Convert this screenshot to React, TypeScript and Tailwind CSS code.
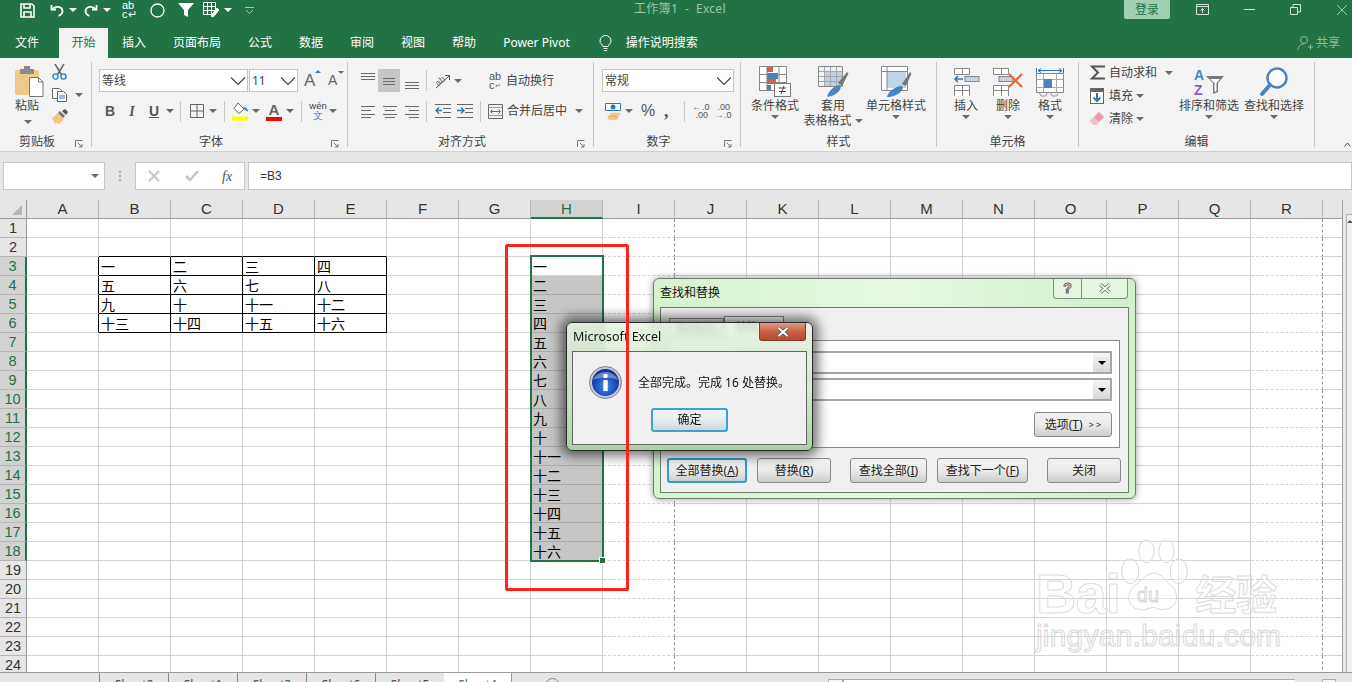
import React from 'react';

const COLS = ['A','B','C','D','E','F','G','H','I','J','K','L','M','N','O','P','Q','R'];
const TABLE: Record<string,string> = {
  B3:'一',C3:'二',D3:'三',E3:'四',
  B4:'五',C4:'六',D4:'七',E4:'八',
  B5:'九',C5:'十',D5:'十一',E5:'十二',
  B6:'十三',C6:'十四',D6:'十五',E6:'十六',
};
const HTEXT = ['一','二','三','四','五','六','七','八','九','十','十一','十二','十三','十四','十五','十六'];

const Caret = ({ c = 'border-t-[#6a6a6a]' }: { c?: string }) => (
  <span className={`inline-block w-0 h-0 border-l-[4px] border-r-[4px] border-t-[4px] border-l-transparent border-r-transparent ${c}`} />
);
const Chevron = () => (
  <svg width="16" height="10" viewBox="0 0 16 10" fill="none" stroke="#444" strokeWidth="1.2"><path d="M1 1.5 8 8.5 15 1.5" /></svg>
);
const Sep = () => <div className="w-px h-[21px] bg-[#c6c6c6]" />;
const Launcher = () => (
  <div className="w-[17px] flex justify-start pl-[1px] pt-[7px]">
    <svg width="8" height="8" viewBox="0 0 8 8" fill="none" stroke="#777"><path d="M.5 7V.5H7.5" /><path d="M2.5 2.5 7 7M7 4v3H4" /></svg>
  </div>
);

const Group = ({ w, label, launcher, children }: { w: string; label: string; launcher?: boolean; children: React.ReactNode }) => (
  <div className={`${w} h-[85px] shrink-0 flex flex-col border-r border-[#c4c4c4]`}>
    <div className="h-[71px] shrink-0">{children}</div>
    <div className="flex h-[14px] leading-[18px] text-[12px] text-[#444]">
      <div className="flex-1 text-center">{label}</div>
      {launcher && <Launcher />}
    </div>
  </div>
);

const Big = ({ w, icon, lines, caretInline }: { w: string; icon: React.ReactNode; lines: string[]; caretInline?: boolean }) => (
  <div className={`${w} shrink-0 flex flex-col items-center text-[12px] leading-[15px] text-[#444]`}>
    <div className="h-[33px] mt-[3px] flex items-center justify-center">{icon}</div>
    {lines.map((l, i) => (
      <div key={l} className="whitespace-nowrap flex items-center gap-[3px]">
        {l}{caretInline && i === lines.length - 1 && <Caret />}
      </div>
    ))}
    {!caretInline && <div className="mt-[2px] leading-none flex"><Caret /></div>}
  </div>
);

const Select = ({ w, text, textColor = 'text-[#444]' }: { w: string; text: string; textColor?: string }) => (
  <div className={`${w} h-[23px] bg-white border border-[#c6c6c6] flex items-center justify-between pl-[2px] pr-[1px] text-[12px] ${textColor}`}>
    <span>{text}</span><Chevron />
  </div>
);

const AlignIcon = ({ ys, xs }: { ys: number[]; xs: [number, number][] }) => (
  <svg width="16" height="20" viewBox="0 0 16 20" stroke="#6a6a6a" strokeWidth="1" fill="none">
    {ys.map((y, i) => <path key={y} d={`M${xs[i % xs.length][0]} ${y + .5}H${xs[i % xs.length][1]}`} />)}
  </svg>
);

const Save = () => (
  <svg width="15" height="15" viewBox="0 0 15 15" fill="none" stroke="#fff" strokeWidth="1.6"><path d="M1 1h11l2 2v11H1z" /><path d="M4 1v4h6V1M4 14V9h7v5" /></svg>
);
const Undo = ({ flip }: { flip?: boolean }) => (
  <svg width="14" height="13" viewBox="0 0 14 13" fill="none" stroke="#fff" strokeWidth="1.8" className={flip ? '-scale-x-100' : ''}><path d="M1.5 1v4.5H6" /><path d="M2 5.5C5 1.5 12 2 12.5 7c.2 2.5-2 4.5-4 4.8" /></svg>
);

const Paste = () => (
  <svg width="29" height="31" viewBox="0 0 29 31">
    <rect x="0" y="4" width="24" height="25" rx="1.5" fill="#f0c987" />
    <rect x="5" y="3" width="14" height="5" fill="#8a8a8a" /><rect x="9" y="0" width="6" height="4" fill="#8a8a8a" />
    <path d="M14.5 11.5h9l4.5 4.5v14.500h-13.500z" fill="#fff" stroke="#777" /><path d="M23.500 11.500v4.500h4.500" fill="none" stroke="#777" />
  </svg>
);
const Scissors = () => (
  <svg width="15" height="16" viewBox="0 0 15 16" fill="none">
    <path d="M3 0 9.500 10.500M12 0 5.500 10.500" stroke="#666" strokeWidth="1.500" />
    <circle cx="3.500" cy="12.500" r="2.600" stroke="#2f78b8" strokeWidth="1.300" /><circle cx="11.500" cy="12.500" r="2.600" stroke="#2f78b8" strokeWidth="1.300" />
  </svg>
);
const Copy = () => (
  <svg width="16" height="14" viewBox="0 0 16 14" fill="#fff" stroke="#666">
    <path d="M.5.500h7l2 2v8H.5z" /><path d="M5.500 3.500h6l3 3v7h-9z" />
    <path d="M7 8h6M7 10h6" stroke="#3a7fbd" />
  </svg>
);
const Brush = () => (
  <svg width="17" height="15" viewBox="0 0 17 15">
    <path d="M0 9 6 4l6 6-5 5-3-1-1 1z" fill="#f0c987" /><path d="M6 4l2-2 5 5-2 2z" fill="#777" /><path d="M10 2l3-2 3 3-2 3z" fill="#555" />
  </svg>
);
const Borders = () => (
  <svg width="14" height="14" viewBox="0 0 14 14" fill="none" stroke="#666"><path d="M.5.500h13v13H.5zM7 .5v13M.5 7h13" /></svg>
);
const Fill = () => (
  <svg width="17" height="19" viewBox="0 0 17 19">
    <path d="M6 1 12 7 7 11.500 2 6.500z" fill="#fff" stroke="#666" /><path d="M11 5c3 0 5 1.500 5 4.500L13 8z" fill="#3a7fbd" />
    <rect x="0" y="14.500" width="16" height="4" fill="#ffff00" />
  </svg>
);
const FontColor = () => (
  <div className="w-[16px] h-[19px] flex flex-col items-center">
    <span className="font-['Liberation_Sans',sans-serif] text-[15px] leading-[15px] font-bold text-[#666]">A</span>
    <span className="w-[16px] h-[4px] bg-[#ff0000]" />
  </div>
);
const Wen = () => (
  <div className="w-[16px] flex flex-col items-center leading-none">
    <span className="text-[9.500px] leading-[10px] text-[#444] font-['Liberation_Sans',sans-serif]">wén</span>
    <span className="text-[10px] leading-[10px] text-[#3a7fbd]">文</span>
  </div>
);
const Orient = () => (
  <svg width="18" height="16" viewBox="0 0 18 16" fill="none" stroke="#666">
    <text x="1" y="11" fontSize="9" fill="#666" stroke="none" transform="rotate(-40 6 8)" fontFamily="Liberation Sans">ab</text>
    <path d="M2 15 15 3M11 2.500h4.500V7" stroke="#555" />
  </svg>
);
const Wrap = () => (
  <div className="w-[13px] flex flex-col leading-none font-['Liberation_Sans',sans-serif] text-[#555]">
    <span className="text-[11px] leading-[9px]">ab</span>
    <span className="text-[11px] leading-[9px] flex items-end">c<span className="text-[7px] text-[#3a7fbd]">↵</span></span>
  </div>
);
const Indent = ({ right }: { right?: boolean }) => (
  <svg width="16" height="14" viewBox="0 0 16 14" fill="none" stroke="#666">
    <path d="M0 .5h16M8 4.500h8M8 8.500h8M0 13.500h16" />
    <path d={right ? 'M0 6.500h6M4 3.500l3 3-3 3' : 'M7 6.500H1M4 3.500l-3 3 3 3'} stroke="#2f78b8" strokeWidth="1.400" />
  </svg>
);
const Merge = () => (
  <svg width="15" height="15" viewBox="0 0 15 15" fill="none"><path d="M.5.500h14v14H.5z" stroke="#666" /><path d="M.5 3.500h14M.5 11.500h14" stroke="#999" /><path d="M3 7.500h9M4.500 5.500l-2 2 2 2M10.500 5.500l2 2-2 2" stroke="#2f78b8" /></svg>
);
const Currency = () => (
  <svg width="17" height="17" viewBox="0 0 17 17">
    <path d="M.5.500h15v7H.5z" fill="#fff" stroke="#2f78b8" /><circle cx="8" cy="4" r="2.500" fill="#2f78b8" />
    <ellipse cx="10" cy="11" rx="5.500" ry="1.500" fill="#f0c987" /><ellipse cx="8" cy="13.500" rx="5.500" ry="1.500" fill="#e8b860" /><ellipse cx="8" cy="15.500" rx="5.500" ry="1.500" fill="#f0c987" />
  </svg>
);
const Dec = ({ more }: { more?: boolean }) => (
  <div className="w-[16px] h-[17px] font-['Liberation_Sans',sans-serif] text-[9px] leading-[8px] text-[#555] flex flex-col">
    {more ? (
      <>
        <div className="text-right">.00</div>
        <div className="flex justify-between items-center"><span className="text-[#2f78b8] text-[10px] leading-[8px] font-bold">→</span>.0</div>
      </>
    ) : (
      <>
        <div className="flex justify-between items-center"><span className="text-[#2f78b8] text-[10px] leading-[8px] font-bold">←</span>.0</div>
        <div className="text-right">.00</div>
      </>
    )}
  </div>
);
const CondFmt = () => (
  <svg width="32" height="31" viewBox="0 0 32 31">
    <path d="M.5.500h27v24H.5zM.5 8.500h27M.5 16.500h27M8 .5v24M20 .5v24" fill="#fff" stroke="#888" />
    <rect x="8" y="1" width="6" height="5" fill="#d85f3f" /><rect x="8" y="7" width="11" height="6" fill="#4a84c0" /><rect x="8" y="13" width="9" height="5" fill="#d85f3f" /><rect x="8" y="19" width="4" height="5" fill="#4a84c0" />
    <rect x="15.500" y="17.500" width="16" height="13" fill="#fff" stroke="#777" /><path d="M20 22h7M20 25.500h7M25 20l-3 8" stroke="#444" fill="none" />
  </svg>
);
const TableFmt = () => (
  <svg width="31" height="32" viewBox="0 0 31 32">
    <rect x=".5" y=".5" width="24" height="20" fill="#f2f2f2" />
    <rect x="6" y="5" width="18" height="15" fill="#bcd0e6" />
    <path d="M.5 5.500h24M.5 10.500h24M.5 15.500h24M6.500.5v20M12.500.5v20M18.500.5v20" stroke="#a8a8a8" fill="none" />
    <path d="M.5.500h24v20H.5z" stroke="#888" fill="none" />
    <path d="M20 17 29 6l1.500 1.500L24 20z" fill="#777" /><path d="M9 31c1-5 7-12 13-12 3 3-3 11-13 12z" fill="#4a84c0" />
  </svg>
);
const CellStyle = () => (
  <svg width="31" height="32" viewBox="0 0 31 32">
    <path d="M.5.500h26v24H.5z" fill="#fff" stroke="#888" /><rect x="6" y="6" width="19" height="16" fill="#c0d3e8" />
    <path d="M.5 5.500h26M6 .5v24" stroke="#888" fill="none" />
    <path d="M21 18 29 6l1.500 1.500L25 20z" fill="#777" /><path d="M6 31c1-5 8-11 15-11 3 3-4 11-15 11z" fill="#4a84c0" />
  </svg>
);
const SmallTable = ({ x, y, w = 15, rows = 1 }: { x: number; y: number; w?: number; rows?: number }) => (
  <path d={`M${x}.5 ${y}.5h${w}v${rows * 5 + 1}h-${w}zM${x + Math.round(w / 2)}.5 ${y}.5v${rows * 5 + 1}${rows > 1 ? `M${x}.5 ${y + 5}.5h${w}` : ''}`} fill="#fff" stroke="#888" />
);
const InsertI = () => (
  <svg width="27" height="28" viewBox="0 0 27 28">
    <SmallTable x={1} y={0} /><SmallTable x={1} y={17} rows={2} />
    <rect x="12" y="8.500" width="14" height="5" fill="#c0d3e8" stroke="#888" />
    <path d="M10 11H2M5 8l-3 3 3 3" stroke="#2f78b8" strokeWidth="1.600" fill="none" />
  </svg>
);
const DeleteI = () => (
  <svg width="30" height="28" viewBox="0 0 30 28">
    <SmallTable x={0} y={0} /><SmallTable x={0} y={17} rows={2} />
    <rect x="6" y="8.500" width="14" height="5" fill="#c0d3e8" stroke="#888" />
    <path d="M16 6 29 19M29 6 16 19" stroke="#e0673f" strokeWidth="2.200" />
  </svg>
);
const FormatI = () => (
  <svg width="28" height="30" viewBox="0 0 28 30">
    <path d="M.5 1v5M27.500 1v5" stroke="#2f78b8" /><path d="M2 3.500h24M5 1.500l-3 2 3 2M23 1.500l3 2-3 2" stroke="#2f78b8" fill="none" />
    <path d="M.5 6.500h27v19H.5z" fill="#fff" stroke="#888" /><path d="M.5 12.500h27M.5 20.500h27M7.500 6.500v19M20.500 6.500v19" stroke="#aaa" fill="none" />
    <rect x="8" y="12" width="8" height="9" fill="#4a84c0" />
    <path d="M3 25l2 4h5l1-4M14 25l2 4h5l1-4" fill="none" stroke="#999" />
  </svg>
);
const FillI = () => (
  <svg width="14" height="16" viewBox="0 0 14 16"><rect x=".5" y=".5" width="13" height="15" fill="#fff" stroke="#666" /><rect x="0" y="0" width="14" height="4" fill="#666" /><path d="M7 5v8M3.500 9.500 7 13l3.500-3.500" stroke="#2f78b8" strokeWidth="2" fill="none" /></svg>
);
const Eraser = () => (
  <svg width="14" height="14" viewBox="0 0 14 14"><path d="M9 0l5 5-8 8H4L0 9z" fill="#ef98a8" /><path d="M0 9l4-4 5 5-3 3H4z" fill="#f4bcc6" /></svg>
);
const SigmaI = () => (
  <svg width="15" height="15" viewBox="0 0 15 15" fill="none" stroke="#555" strokeWidth="2"><path d="M15 1.500H2L8 7.500 2 13.500H15" /></svg>
);
const SortI = () => (
  <div className="relative w-[30px] h-[28px]">
    <div className="flex flex-col font-['Liberation_Sans',sans-serif] font-bold text-[14px] leading-[15px]">
      <span className="text-[#4a84c0]">A</span><span className="text-[#8b5fb8]">Z</span>
    </div>
    <svg className="absolute left-[12px] top-[8px]" width="18" height="18" viewBox="0 0 18 18" fill="#777"><path d="M0 0h18l-6 7v9l-5 2V7z" /><path d="M4 3h10l-3.500 4v8l-2 1V7z" fill="#fff" /></svg>
  </div>
);
const Magnifier = () => (
  <svg width="28" height="29" viewBox="0 0 28 29" fill="none"><circle cx="17" cy="11" r="9.500" stroke="#4a84c0" strokeWidth="2.400" fill="#fff" /><path d="M10 18 2 27" stroke="#4a84c0" strokeWidth="4" strokeLinecap="round" /></svg>
);

const Dialog2Btn = ({ w, ml, children, focus }: { w: string; ml: string; children: React.ReactNode; focus?: boolean }) => (
  <div className={`${w} ${ml} h-[25px] shrink-0 rounded-[3px] text-[12px] text-[#222] flex items-center justify-center bg-gradient-to-b from-[#f2f2f2] via-[#ebebeb] to-[#cdcdcd] ${focus ? 'border-2 border-[#3a9bc8]' : 'border border-[#8a8a8a]'}`}>{children}</div>
);
const DropRow = ({ mt }: { mt: string }) => (
  <div className={`${mt} flex justify-end pr-[7px]`}>
    <div className="w-[375px] h-[23px] border-2 border-[#a5a5a5] flex justify-end bg-white">
      <div className="w-[17px] h-full bg-gradient-to-b from-[#f5f5f5] to-[#d8d8d8] flex items-center justify-center"><Caret c="border-t-black" /></div>
    </div>
  </div>
);

export default function App() {
  return (
    <div className="relative w-[1352px] h-[682px] overflow-hidden bg-[#e6e6e6] flex flex-col font-['Noto_Sans','Noto_Sans_CJK_SC',sans-serif] text-[12px]">
      {/* title bar */}
      <div className="h-[28px] shrink-0 bg-[#217346] flex items-start relative">
        <div className="flex items-center h-[20px] pl-[20px]">
          <Save />
          <div className="ml-[15px]"><Undo /></div>
          <div className="ml-[5px] flex"><Caret c="border-t-white" /></div>
          <div className="ml-[7px]"><Undo flip /></div>
          <div className="ml-[5px] flex"><Caret c="border-t-white" /></div>
          <div className="ml-[11px] w-[13px] font-['Liberation_Sans',sans-serif] text-white flex flex-col"><span className="text-[11px] leading-[9px]">ab</span><span className="text-[11px] leading-[9px]">c↵</span></div>
          <svg className="ml-[15px]" width="15" height="15" viewBox="0 0 15 15" fill="none" stroke="#fff" strokeWidth="1.300"><circle cx="7.500" cy="7.500" r="6.500" /></svg>
          <svg className="ml-[13px]" width="16" height="14" viewBox="0 0 16 14" fill="#fff"><path d="M0 0h16l-6 7v7l-4-2V7z" /></svg>
          <svg className="ml-[9px]" width="17" height="17" viewBox="0 0 17 17" fill="none" stroke="#fff"><path d="M.5.500h12v12H.5zM.5 4.500h12M.5 8.500h12M4.500.5v12M8.500.5v12" /><path d="M8 14l6-8 2 2-6 7z" fill="#fff" /></svg>
          <div className="ml-[4px] flex"><Caret c="border-t-white" /></div>
          <svg className="ml-[13px]" width="9" height="9" viewBox="0 0 9 9" fill="none" stroke="#a5c8b4"><path d="M0 1.500h9M1 4l3.500 3.500L8 4" /></svg>
        </div>
        <div className="absolute left-[634px] top-0 h-[17px] leading-[17px] text-[#9cc4ad] tracking-[0.3px] whitespace-pre">工作簿1  -  Excel</div>
        <div className="ml-auto flex h-[19px] items-center">
          <div className="w-[46px] h-[19px] rounded-b-[2px] bg-[#a0cfb3] text-[#217346] flex items-center justify-center">登录</div>
          <svg className="ml-[26px]" width="13" height="11" viewBox="0 0 13 11" fill="none" stroke="#cfe3d7"><path d="M.5.500h12v10H.5zM.5 2.500h12M6.500 9V4.500M4.500 6.500l2-2 2 2" /></svg>
          <div className="ml-[35px] w-[11px] h-px bg-[#cfe3d7]" />
          <svg className="ml-[35px]" width="11" height="11" viewBox="0 0 11 11" fill="none" stroke="#cfe3d7"><path d="M.5 3.500h7v7h-7zM3 3V.5h7.500V8H8" /></svg>
          <svg className="ml-[35px] mr-[4px]" width="12" height="12" viewBox="0 0 12 12" fill="none" stroke="#9cc4ad"><path d="M1 1l10 10M11 1 1 11" /></svg>
        </div>
      </div>
      {/* tab row */}
      <div className="h-[30px] shrink-0 bg-[#217346] flex items-stretch text-white">
        <div className="ml-[15px] flex items-center">文件</div>
        <div className="ml-[20px] w-[49px] bg-[#f3f3f3] text-[#217346] flex items-center justify-center">开始</div>
        <div className="ml-[14px] flex items-center gap-[27px] whitespace-nowrap">
          <span>插入</span><span>页面布局</span><span>公式</span><span>数据</span><span>审阅</span><span>视图</span><span>帮助</span>
          <span>Power Pivot</span>
        </div>
        <svg className="ml-[29px] self-center" width="13" height="16" viewBox="0 0 13 16" fill="none" stroke="#fff"><path d="M4 11.500C3 9 1 8.500 1 6a5.500 5.500 0 0 1 11 0c0 2.500-2 3-3 5.500zM4.500 13.500h4M5 15.500h3" /></svg>
        <div className="ml-[14px] flex items-center">操作说明搜索</div>
        <div className="ml-auto mr-[12px] flex items-center gap-[3px] text-[#8fb8a2]">
          <svg width="16" height="16" viewBox="0 0 16 16" fill="none" stroke="#8fb8a2"><circle cx="7" cy="5" r="3.500" /><path d="M1 15c0-4 3-6 6-6M11 12h5M13.500 9.500v5" /></svg>
          共享
        </div>
      </div>
      {/* ribbon */}
      <div className="h-[94px] shrink-0 bg-[#f3f3f3] border-b border-[#d0d0d0] pt-[4px] flex">
        <Group w="w-[92px]" label="剪贴板" launcher>
          <div className="flex pr-[2px]">
            <div className="pl-[15px] w-[52px] shrink-0 flex flex-col text-[#444]">
              <div className="mt-[4px]"><Paste /></div>
              <div className="mt-[1px] leading-[16px]">粘贴</div>
              <div className="ml-[9px] leading-none flex mt-[6px]"><Caret /></div>
            </div>
            <div className="flex flex-col">
              <div className="mt-[2px]"><Scissors /></div>
              <div className="mt-[8px] flex items-center"><Copy /><span className="ml-[7px] flex"><Caret /></span></div>
              <div className="mt-[7px]"><Brush /></div>
            </div>
          </div>
        </Group>
        <Group w="w-[256px]" label="字体" launcher>
          <div className="flex items-center mt-[7px] ml-[7px]">
            <Select w="w-[149px]" text="等线" />
            <Select w="w-[49px] ml-px" text="11" />
            <div className="ml-[6px] w-[14px] relative font-['Liberation_Sans',sans-serif] text-[17px] text-[#666] leading-[19px]">A<span className="absolute -top-[1px] right-[-3px]"><span className="block w-0 h-0 border-l-[3px] border-r-[3px] border-b-[3px] border-l-transparent border-r-transparent border-b-[#3a7fbd]" /></span></div>
            <div className="ml-[10px] w-[12px] relative font-['Liberation_Sans',sans-serif] text-[14px] text-[#666] leading-[19px]">A<span className="absolute top-0 right-[-4px]"><span className="block w-0 h-0 border-l-[3px] border-r-[3px] border-t-[3px] border-l-transparent border-r-transparent border-t-[#3a7fbd]" /></span></div>
          </div>
          <div className="flex items-center mt-[8px] ml-[7px] h-[22px] text-[#555] font-['Liberation_Sans',sans-serif] text-[14px]">
            <div className="w-[22px] text-center font-bold">B</div>
            <div className="w-[22px] text-center italic font-['Liberation_Serif',serif] font-bold">I</div>
            <div className="w-[22px] text-center font-bold underline">U</div>
            <div className="w-[10px] flex justify-center"><Caret /></div>
            <div className="ml-[5px]"><Sep /></div>
            <div className="ml-[9px] flex"><Borders /></div>
            <div className="ml-[5px] flex"><Caret /></div>
            <div className="ml-[7px]"><Sep /></div>
            <div className="ml-[7px] flex"><Fill /></div>
            <div className="ml-[3px] flex"><Caret /></div>
            <div className="ml-[6px] flex"><FontColor /></div>
            <div className="ml-[4px] flex"><Caret /></div>
            <div className="ml-[7px]"><Sep /></div>
            <div className="ml-[8px] flex"><Wen /></div>
            <div className="ml-[3px] flex"><Caret /></div>
          </div>
        </Group>
        <Group w="w-[246px]" label="对齐方式" launcher>
          <div className="flex items-center mt-[7px] ml-[12px] h-[23px]">
            <AlignIcon ys={[2, 5, 8]} xs={[[1, 15]]} />
            <div className="ml-[2px] w-[22px] h-[23px] bg-[#c6c6c6] flex items-center justify-center"><AlignIcon ys={[7, 10, 13]} xs={[[2, 14]]} /></div>
            <div className="ml-[4px]"><AlignIcon ys={[11, 14, 17]} xs={[[1, 15]]} /></div>
            <div className="ml-[6px]"><Sep /></div>
            <div className="ml-[7px] flex"><Orient /></div>
            <div className="ml-[2px] flex"><Caret /></div>
            <div className="ml-[27px] flex"><Wrap /></div>
            <div className="ml-[4px] text-[#444] whitespace-nowrap">自动换行</div>
          </div>
          <div className="flex items-center mt-[8px] ml-[12px] h-[22px]">
            <AlignIcon ys={[5, 9, 13, 16]} xs={[[1, 15], [1, 11]]} />
            <div className="ml-[6px]"><AlignIcon ys={[5, 9, 13, 16]} xs={[[1, 15], [3, 13]]} /></div>
            <div className="ml-[6px]"><AlignIcon ys={[5, 9, 13, 16]} xs={[[1, 15], [5, 15]]} /></div>
            <div className="ml-[6px]"><Sep /></div>
            <div className="ml-[8px] flex"><Indent /></div>
            <div className="ml-[6px] flex"><Indent right /></div>
            <div className="ml-[7px]"><Sep /></div>
            <div className="ml-[7px] flex"><Merge /></div>
            <div className="ml-[4px] text-[#444] whitespace-nowrap">合并后居中</div>
            <div className="ml-[8px] flex"><Caret /></div>
          </div>
        </Group>
        <Group w="w-[147px]" label="数字" launcher>
          <div className="flex mt-[7px] ml-[8px]"><Select w="w-[132px]" text="常规" /></div>
          <div className="flex items-center mt-[8px] ml-[11px] h-[22px]">
            <Currency />
            <div className="ml-[3px] flex"><Caret /></div>
            <div className="ml-[8px] w-[14px] font-['Liberation_Sans',sans-serif] text-[16px] text-[#555]">%</div>
            <div className="ml-[9px] w-[5px] font-['Liberation_Serif',serif] font-bold text-[18px] leading-[12px] text-[#555]">,</div>
            <div className="ml-[15px]"><Sep /></div>
            <div className="ml-[7px] flex"><Dec /></div>
            <div className="ml-[6px] flex"><Dec more /></div>
          </div>
        </Group>
        <Group w="w-[196px]" label="样式">
          <div className="flex pl-[5px]">
            <Big w="w-[58px]" icon={<CondFmt />} lines={['条件格式']} />
            <Big w="w-[58px]" icon={<TableFmt />} lines={['套用', '表格格式']} caretInline />
            <Big w="w-[68px]" icon={<CellStyle />} lines={['单元格样式']} />
          </div>
        </Group>
        <Group w="w-[142px]" label="单元格">
          <div className="flex pl-[8px]">
            <Big w="w-[42px]" icon={<InsertI />} lines={['插入']} />
            <Big w="w-[42px]" icon={<DeleteI />} lines={['删除']} />
            <Big w="w-[42px]" icon={<FormatI />} lines={['格式']} />
          </div>
        </Group>
        <Group w="w-[236px]" label="编辑">
          <div className="flex">
            <div className="w-[100px] pl-[11px] shrink-0 flex flex-col mt-[-1px] text-[#444]">
              <div className="h-[23px] flex items-center">
                <span className="flex w-[15px]"><SigmaI /></span>
                <span className="ml-[4px] whitespace-nowrap">自动求和</span><span className="ml-[8px] flex"><Caret /></span>
              </div>
              <div className="h-[23px] flex items-center">
                <span className="flex w-[15px]"><FillI /></span>
                <span className="ml-[4px]">填充</span><span className="ml-[3px] flex"><Caret /></span>
              </div>
              <div className="h-[23px] flex items-center">
                <span className="flex w-[15px]"><Eraser /></span>
                <span className="ml-[4px]">清除</span><span className="ml-[3px] flex"><Caret /></span>
              </div>
            </div>
            <Big w="w-[60px]" icon={<SortI />} lines={['排序和筛选']} />
            <Big w="w-[60px] ml-[5px]" icon={<Magnifier />} lines={['查找和选择']} />
          </div>
        </Group>
        <div className="flex-1 flex items-end justify-end pr-[1px] pb-[4px]">
          <svg width="7" height="5" viewBox="0 0 7 5" fill="none" stroke="#555"><path d="M.5 4.500 3.500 1 6.500 4.500" /></svg>
        </div>
      </div>
      {/* formula bar */}
      <div className="h-[48px] shrink-0 flex pt-[10px] pb-[10px] bg-[#e6e6e6]">
        <div className="ml-[3px] w-[102px] h-[28px] bg-white border border-[#c6c6c6] flex items-center justify-end pr-[5px]"><Caret /></div>
        <div className="w-[30px] flex flex-col items-center justify-center gap-[2px]">
          <span className="w-[2px] h-[2px] bg-[#aaa]" /><span className="w-[2px] h-[2px] bg-[#aaa]" /><span className="w-[2px] h-[2px] bg-[#aaa]" />
        </div>
        <div className="w-[110px] h-[28px] bg-white border border-[#c6c6c6] flex items-center pl-[12px]">
          <svg width="12" height="12" viewBox="0 0 12 12" stroke="#c6c6c6" strokeWidth="2"><path d="M1 1l10 10M11 1 1 11" /></svg>
          <svg className="ml-[25px]" width="14" height="12" viewBox="0 0 14 12" fill="none" stroke="#c6c6c6" strokeWidth="2.500"><path d="M1 6l4 4 8-9" /></svg>
          <span className="ml-[23px] font-['Liberation_Serif',serif] italic text-[14px] text-[#555]">fx</span>
        </div>
        <div className="ml-[3px] flex-1 h-[28px] bg-white border border-[#c6c6c6] flex items-center pl-[11px] text-[12px] text-[#333] font-['Liberation_Sans',sans-serif]">=B3</div>
      </div>
      {/* sheet */}
      <div className="flex-1 min-h-0 flex overflow-hidden">
        <div className="w-[1343px] shrink-0 overflow-hidden border-r border-[#a0a0a0] bg-white">
          <div className="grid grid-cols-[27px_repeat(18,72px)_19px] grid-rows-[19px] auto-rows-[19px] font-['Liberation_Sans','Noto_Sans_CJK_SC',sans-serif]">
            <div className="bg-[#e6e6e6] border-b border-r border-[#9a9a9a] flex items-end justify-end pr-[4px] pb-[3px]">
              <svg width="10" height="10" viewBox="0 0 10 10" fill="#b5b5b5"><path d="M10 0v10H0z" /></svg>
            </div>
            {COLS.map((c) => (
              <div key={c} className={`border-r border-[#b5b5b5] flex items-center justify-center pt-[1px] text-[15px] ${c === 'H' ? 'bg-[#d2d2d2] text-[#217346] border-b-2 border-b-[#217346]' : 'bg-[#e6e6e6] text-[#333] border-b border-b-[#9a9a9a]'}`}>{c}</div>
            ))}
            <div className="bg-[#e6e6e6] border-b border-[#9a9a9a]" />
            {Array.from({ length: 24 }, (_, r) => r + 1).map((row) => (
              <React.Fragment key={row}>
                <div className={`border-b flex items-center justify-center pt-[1px] text-[14.500px] ${row >= 3 && row <= 18 ? 'bg-[#d2d2d2] text-[#217346] border-[#b5b5b5] border-r-2 border-r-[#217346]' : 'bg-[#e6e6e6] text-[#333] border-[#b5b5b5] border-r border-r-[#9a9a9a]'}`}>{row}</div>
                {COLS.map((c) => {
                  const id = `${c}${row}`;
                  const inTable = row >= 3 && row <= 6 && c >= 'B' && c <= 'E';
                  const blackRight = row >= 3 && row <= 6 && c >= 'A' && c <= 'E';
                  const blackBottom = row >= 2 && row <= 6 && c >= 'B' && c <= 'E';
                  const sel = c === 'H' && row >= 4 && row <= 18;
                  const bR = blackRight ? 'border-r border-r-black' : c === 'I' || c === 'R' ? 'border-r border-dashed border-r-[#999]' : sel ? 'border-r border-r-[#c6c6c6]' : 'border-r border-r-[#d4d4d4]';
                  const bB = blackBottom ? 'border-b border-b-black' : sel ? 'border-b border-b-[#a9a9a9]' : 'border-b border-b-[#d4d4d4]';
                  const text = inTable ? TABLE[id] : c === 'H' && row >= 3 && row <= 18 ? HTEXT[row - 3] : '';
                  return (
                    <div key={id} className={`${bR} ${bB} ${sel ? 'bg-[#c6c6c6]' : ''} pl-[2px] text-[14px] leading-[20px] text-black overflow-hidden whitespace-nowrap`}>{text}</div>
                  );
                })}
                <div className="border-b border-[#d4d4d4]" />
              </React.Fragment>
            ))}
          </div>
        </div>
        <div className="flex-1 pl-[3px]">
          <div className="mt-[14px] h-[458px] bg-[#f0f0f0] border-l border-t border-[#b0b0b0] flex justify-center pt-[5px]">
            <span className="block w-0 h-0 border-l-[3px] border-r-[3px] border-b-[3px] border-l-transparent border-r-transparent border-b-[#555]" />
          </div>
        </div>
      </div>
      {/* sheet tabs */}
      <div className="h-[10px] shrink-0 border-t border-[#9a9a9a] bg-[#e6e6e6] flex text-[12px] leading-[14px] text-[#444] font-['Noto_Sans',sans-serif] overflow-hidden">
        <div className="w-[99px] shrink-0" />
        {['Sheet2', 'Sheet1', 'Sheet3', 'Sheet6', 'Sheet5'].map((s) => (
          <div key={s} className="w-[69px] shrink-0 border-l border-[#888] pt-[5px] text-center">{s}</div>
        ))}
        <div className="w-[67px] shrink-0 bg-white mt-[-1px] pt-[6px] text-center text-[#217346]">Sheet4</div>
        <div className="w-px shrink-0 bg-[#9a9a9a]" />
        <div className="ml-[33px] mt-[5px] w-[15px] h-[15px] shrink-0 rounded-full border border-[#888]" />
        <div className="ml-[268px] mt-[6px] w-[15px] h-[10px] shrink-0 bg-[#f5f5f5] border border-[#aaa]" />
        <div className="mt-[6px] w-[452px] h-[10px] shrink-0 bg-white border-l border-t border-[#aaa]" />
        <div className="mt-[6px] w-[27px] shrink-0" />
        <div className="mt-[6px] w-[14px] h-[10px] shrink-0 bg-[#f5f5f5] border border-[#aaa]" />
      </div>

      {/* Selection overlay */}
      <div className="absolute left-[530px] top-[255px] w-[74px] h-[307px] border-2 border-[#217346]" />
      <div className="absolute left-[599px] top-[557px] w-[7px] h-[7px] bg-[#217346] border border-white" />

      {/* watermark */}
      <div className="absolute left-[1036px] top-[537px] w-[250px] h-[120px] font-['Liberation_Sans',sans-serif] text-transparent [-webkit-text-stroke:1px_#dcdcdc]">
        <div className="flex items-end h-[78px]">
          <span className="text-[56px] leading-[62px] font-bold tracking-[-1px] mb-[-10px]">Bai</span>
          <svg className="ml-[-3px]" width="74" height="78" viewBox="0 0 74 82" fill="#fff" fillOpacity="0.4" stroke="#d6d6d6" strokeWidth="1">
            <ellipse cx="12" cy="36" rx="9" ry="13" /><ellipse cx="29" cy="15" rx="8" ry="12" /><ellipse cx="50" cy="15" rx="8" ry="12" /><ellipse cx="63" cy="36" rx="9" ry="13" />
            <path d="M37 38c8 0 12 8 18 13 8 6 9 23-6 25-7 1-10-2-13-2s-8 4-15 2C8 74 8 58 16 52c7-5 12-14 21-14z" />
            <text x="19" y="68" fontSize="21" fontFamily="Liberation Sans" fill="none">du</text>
          </svg>
          <span className="ml-[4px] mb-[-1px] text-[41px] leading-[48px] font-bold font-['Noto_Sans_CJK_SC',sans-serif]">经验</span>
        </div>
        <div className="text-[30px] leading-[36px] mt-[3px] tracking-[0.2px] whitespace-nowrap [-webkit-text-stroke:1px_#d8d8d8]">jingyan.baidu.com</div>
      </div>

      {/* find & replace */}
      <div className="absolute left-[653px] top-[278px] w-[483px] h-[221px] rounded-[6px] border border-[#6e7e6e] shadow-[0_0_7px_rgba(0,0,0,0.4)] bg-gradient-to-r from-[#d6f3d0] via-[#e6f8e2] to-[#d2f0cc] flex flex-col">
        <div className="h-[28px] shrink-0 flex">
          <div className="pl-[6px] pt-[5px] text-[12px] leading-[18px] text-[#111]">查找和替换</div>
          <div className="ml-auto mr-[7px] w-[75px] h-[20px] border border-t-0 border-[#7f907f] rounded-b-[4px] flex bg-[#e4f5e0]">
            <div className="w-[28px] border-r border-[#7f907f] flex items-center justify-center text-[14px] font-bold text-white [-webkit-text-stroke:1px_#666] font-['Liberation_Sans',sans-serif]">?</div>
            <div className="flex-1 flex items-center justify-center">
              <svg width="12" height="11" viewBox="0 0 12 11"><path d="M1.500 1.500l9 8M10.500 1.500l-9 8" stroke="#666" strokeWidth="3.400" /><path d="M1.500 1.500l9 8M10.500 1.500l-9 8" stroke="#f4f4f4" strokeWidth="1.700" /></svg>
            </div>
          </div>
        </div>
        <div className="mx-[6px] h-[186px] border border-[#6e7e6e] bg-[#f0f0f0] flex flex-col">
          <div className="pl-[8px] pt-[8px] flex h-[32px] items-end text-[12px] text-[#333]">
            <div className="w-[55px] h-[22px] border border-b-0 border-[#8a8a8a] bg-[#e8e8e8] text-center leading-[20px]">查找(D)</div>
            <div className="w-[60px] h-[24px] border border-b-0 border-[#8a8a8a] bg-white text-center leading-[22px]">替换(P)</div>
          </div>
          <div className="ml-[7px] w-[452px] h-[108px] border border-[#8a8a8a] bg-white flex flex-col">
            <DropRow mt="mt-[10px]" />
            <DropRow mt="mt-[4px]" />
            <div className="mt-[11px] flex justify-end pr-[7px]">
              <Dialog2Btn w="w-[78px]" ml="ml-0"><span>选项(<span className="underline">T</span>)</span><span className="ml-[6px] text-[9px]">&gt; &gt;</span></Dialog2Btn>
            </div>
          </div>
          <div className="flex mt-[10px] ml-[6px]">
            <Dialog2Btn w="w-[80px]" ml="ml-0" focus><span>全部替换(<span className="underline">A</span>)</span></Dialog2Btn>
            <Dialog2Btn w="w-[74px]" ml="ml-[10px]"><span>替换(<span className="underline">R</span>)</span></Dialog2Btn>
            <Dialog2Btn w="w-[77px]" ml="ml-[19px]"><span>查找全部(<span className="underline">I</span>)</span></Dialog2Btn>
            <Dialog2Btn w="w-[91px]" ml="ml-[10px]"><span>查找下一个(<span className="underline">F</span>)</span></Dialog2Btn>
            <Dialog2Btn w="w-[74px]" ml="ml-[19px]">关闭</Dialog2Btn>
          </div>
        </div>
      </div>

      {/* alert */}
      <div className="absolute left-[566px] top-[322px] w-[247px] h-[129px] rounded-[6px] border border-[#2a2a2a] shadow-[0_0_12px_5px_rgba(0,0,0,0.55)] backdrop-blur-[3px] bg-gradient-to-b from-[#e4f3e0cc] via-[#cfe8cacc] to-[#a9d3a3] flex flex-col">
        <div className="h-[28px] shrink-0 flex">
          <div className="pl-[6px] pt-[5px] text-[12.500px] leading-[18px] text-[#111] font-['Noto_Sans',sans-serif] whitespace-nowrap">Microsoft Excel</div>
          <div className="ml-auto mr-[6px] w-[47px] h-[18px] rounded-b-[3px] border border-t-0 border-[#8a3a2a] bg-gradient-to-b from-[#dc9a88] via-[#c8604a] to-[#b84a32] flex items-center justify-center">
            <svg width="12" height="10" viewBox="0 0 12 10"><path d="M1.500 1l9 8M10.500 1l-9 8" stroke="#555" strokeWidth="3.500" /><path d="M1.500 1l9 8M10.500 1l-9 8" stroke="#fff" strokeWidth="2" /></svg>
          </div>
        </div>
        <div className="mx-[5px] h-[94px] border border-[#666] bg-[#f0f0f0] flex flex-col">
          <div className="flex items-center mt-[14px] ml-[16px]">
            <svg width="33" height="33" viewBox="0 0 33 33">
              <defs>
                <radialGradient id="ib" cx="50%" cy="65%" r="60%"><stop offset="0" stopColor="#3f8cf0" /><stop offset="0.6" stopColor="#1f4fc0" /><stop offset="1" stopColor="#12318c" /></radialGradient>
              </defs>
              <circle cx="16.500" cy="16.500" r="16" fill="#c4cad6" stroke="#7a8090" />
              <circle cx="16.500" cy="16.500" r="13.500" fill="url(#ib)" />
              <path d="M4 14a13 11 0 0 1 25 0c-6-3-18-3-25 0z" fill="#fff" fillOpacity="0.35" />
              <circle cx="16.500" cy="10" r="2.300" fill="#fff" />
              <path d="M14.300 14h4.400v11h-4.400z" fill="#fff" />
            </svg>
            <div className="ml-[16px] text-[12px] text-[#111] whitespace-nowrap font-['Noto_Sans','Noto_Sans_CJK_SC',sans-serif]">全部完成。完成 16 处替换。</div>
          </div>
          <div className="mt-[9px] ml-[78px] w-[77px] h-[24px] rounded-[3px] border-2 border-[#3fa0d4] bg-gradient-to-b from-[#f4f6f8] via-[#e8ecef] to-[#cdd6dc] flex items-center justify-center text-[12px] text-[#111]">确定</div>
        </div>
      </div>

      {/* red annotation */}
      <div className="absolute left-[505px] top-[244px] w-[124px] h-[347px] border-[3px] border-[#ff2418] rounded-[2px]" />
    </div>
  );
}
